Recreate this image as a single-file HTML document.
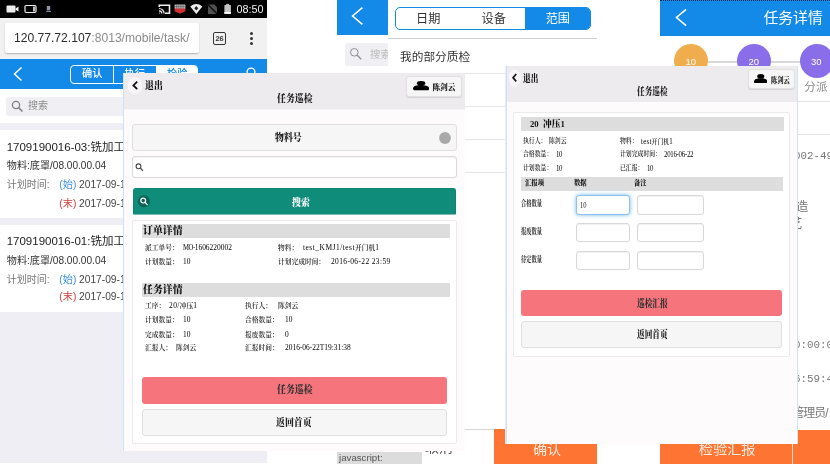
<!DOCTYPE html>
<html lang="zh-CN">
<head>
<meta charset="utf-8">
<title>任务巡检</title>
<style>
html,body{margin:0;padding:0;}
body{width:830px;height:467px;overflow:hidden;background:#fff;position:relative;-webkit-font-smoothing:antialiased;font-family:"Liberation Sans","Noto Sans CJK SC",sans-serif;}
.a{position:absolute;white-space:nowrap;line-height:1;}
.box{position:absolute;box-sizing:border-box;}
.sans{font-family:"Liberation Sans","Noto Sans CJK SC",sans-serif;}
.serif{font-family:"Liberation Serif","Noto Serif CJK SC",serif;}
.mono{font-family:"Liberation Mono","Noto Sans CJK SC",monospace;}
.b{font-weight:bold;}
.t.b{font-weight:900;}
.n{font-weight:400;color:#000;}
.l2{font-weight:400;font-size:7.2px;letter-spacing:-0.45px;position:relative;top:0.3px;}
/* ---------- left phone ---------- */
#p1{will-change:transform;position:absolute;left:0;top:0;width:267px;height:463px;overflow:hidden;background:#efeef4;}
/* ---------- middle phone ---------- */
#p2{will-change:transform;position:absolute;left:337px;top:0;width:323px;height:464px;overflow:hidden;background:#fff;}
/* ---------- right phone ---------- */
#p3{will-change:transform;position:absolute;left:660px;top:0;width:170px;height:464px;overflow:hidden;background:#fff;}
/* ---------- dialogs ---------- */
.dlg{will-change:transform;position:absolute;box-sizing:border-box;background:#fefbfd;border-left:1px solid #cfe0f7;overflow:hidden;}
.dh{position:absolute;left:0;top:0;right:0;background:#eeebee;}
.btn{position:absolute;box-sizing:border-box;background:#f6f6f6;border:1px solid #e0e0e0;border-radius:3px;}
.hd{position:absolute;background:#dddddd;border-radius:1px;}
.t{position:absolute;white-space:nowrap;line-height:1;transform-origin:0 50%;color:#1c1c1c;font-weight:600;font-family:"Liberation Serif","Noto Serif CJK SC",serif;}
</style>
</head>
<body>

<!-- ================= LEFT PHONE ================= -->
<div id="p1">
  <!-- status bar -->
  <div class="box" style="left:0;top:0;width:267px;height:18px;background:#000;"></div>
  <svg class="a" style="left:0;top:0;" width="267" height="18" viewBox="0 0 267 18">
    <!-- camera -->
    <rect x="6.5" y="5.5" width="9" height="7" rx="1" fill="#eee"/>
    <path d="M15.5 8.5 L18.5 6.5 V11.5 L15.5 9.8Z" fill="#eee"/>
    <!-- battery-like -->
    <rect x="25" y="5.5" width="11" height="7" rx="1.2" fill="none" stroke="#eee" stroke-width="1.2"/>
    <rect x="33.2" y="6.5" width="1.6" height="5" fill="#eee"/>
    <rect x="46.8" y="6" width="3.4" height="4.4" fill="#8b97a8"/><rect x="46" y="11" width="5" height="0.9" fill="#8b97a8"/>
    <!-- cast -->
    <path d="M159.3 7 V5.3 h10.2 v8 h-4.5" fill="none" stroke="#eee" stroke-width="1.6"/>
    <path d="M159 13.6 v-1.2 a1.2 1.2 0 0 1 1.2 1.2z" fill="#eee"/>
    <path d="M159 10.8 a2.8 2.8 0 0 1 2.8 2.8 M159 8.5 a5.1 5.1 0 0 1 5.1 5.1" fill="none" stroke="#eee" stroke-width="1.2"/>
    <!-- red block -->
    <rect x="174.6" y="4.4" width="10.8" height="5" rx="0.8" fill="#b9b9b9"/>
    <path d="M176.6 4.4 v4.6 M178.8 4.4 v4.6 M181 4.4 v4.6 M183.2 4.4 v4.6 M174.6 6.6 h10.8" stroke="#555" stroke-width="0.6"/>
    <path d="M174.6 8.6 h10.8 v2.6 l-5.4 2.6 l-5.4 -2.6z" fill="#cf3030"/>
    <!-- wifi -->
    <path d="M190.2 6.4 Q196.3 1.6 202.4 6.4 L196.3 14Z" fill="#eee"/>
    <path d="M194.3 8.3 L196.3 6 L198.3 8.3 L196.3 10.6Z" fill="#222"/>
    <!-- no sim -->
    <path d="M208 4.5 h6.3 l2.7 2.7 v6.8 h-9z" fill="#505050"/>
    <path d="M207.2 4 L217.6 14.3" stroke="#0a0a0a" stroke-width="1.3"/>
    <!-- battery -->
    <rect x="224.4" y="5" width="6.5" height="8.8" fill="#c4c4c4"/>
    <rect x="226.2" y="3.9" width="2.9" height="1.4" fill="#c4c4c4"/>
    <rect x="224.4" y="12" width="6.5" height="1.8" fill="#fff"/>
  </svg>
  <div class="a sans" style="left:236.5px;top:3.9px;font-size:10.8px;color:#f2f2f2;">08:50</div>

  <!-- url bar -->
  <div class="box" style="left:0;top:18px;width:267px;height:41px;background:#f1f1f1;"></div>
  <div class="box" style="left:5px;top:23px;width:194px;height:30px;background:#fff;border-radius:2px;box-shadow:0 1px 1.5px rgba(0,0,0,.25);"></div>
  <div class="a sans" style="left:14px;top:32.3px;font-size:12.1px;color:#8a8a8a;"><span style="color:#2b2b2b;">120.77.72.107</span>:8013/mobile/task/</div>
  <div class="box" style="left:195px;top:24px;width:4px;height:28px;background:linear-gradient(90deg,rgba(255,255,255,0),#fff);"></div>
  <div class="box" style="left:212.7px;top:31.5px;width:13.5px;height:13.5px;border:1.3px solid #333;border-radius:2px;"></div>
  <div class="a sans b" style="left:215.4px;top:34.7px;font-size:7.4px;color:#333;">26</div>
  <div class="box" style="left:250px;top:31.8px;width:3px;height:3px;border-radius:2px;background:#333;"></div>
  <div class="box" style="left:250px;top:36.8px;width:3px;height:3px;border-radius:2px;background:#333;"></div>
  <div class="box" style="left:250px;top:41.8px;width:3px;height:3px;border-radius:2px;background:#333;"></div>

  <!-- blue header -->
  <div class="box" style="left:0;top:59px;width:267px;height:30px;background:#1389e8;"></div>
  <svg class="a" style="left:10px;top:64px;" width="16" height="20" viewBox="0 0 16 20"><path d="M11.5 3.5 L4.5 10 L11.5 16.5" fill="none" stroke="#fff" stroke-width="1.5"/></svg>
  <div class="box" style="left:70px;top:65px;width:128px;height:19px;border:1px solid #fff;border-radius:4px;overflow:hidden;">
    <div class="box" style="left:41.5px;top:0;width:1px;height:19px;background:#fff;"></div>
    <div class="box" style="left:84.5px;top:0;width:44px;height:19px;background:#fff;"></div>
    <div class="a sans" style="left:11px;top:3.3px;font-size:10.2px;font-weight:500;color:#fff;">确认</div>
    <div class="a sans" style="left:53.5px;top:3.3px;font-size:10.2px;font-weight:500;color:#fff;">执行</div>
    <div class="a sans" style="left:96px;top:3.3px;font-size:10.2px;font-weight:500;color:#1389e8;">检验</div>
  </div>
  <svg class="a" style="left:243.5px;top:64.8px;" width="16" height="16" viewBox="0 0 16 16"><circle cx="7" cy="7" r="3.9" fill="none" stroke="#fff" stroke-width="1.4"/><path d="M10 10 L14 14" stroke="#fff" stroke-width="1.3"/></svg>

  <!-- search -->
  <div class="box" style="left:0;top:89px;width:267px;height:34px;background:#fff;"></div>
  <div class="box" style="left:6px;top:97px;width:255px;height:19px;background:#efeff4;border-radius:3px;"></div>
  <svg class="a" style="left:11px;top:100px;" width="13" height="13" viewBox="0 0 13 13"><circle cx="5" cy="5" r="3.6" fill="none" stroke="#808086" stroke-width="1.3"/><path d="M7.6 7.6 L11.5 11.5" stroke="#808086" stroke-width="1.5"/></svg>
  <div class="a sans" style="left:28px;top:101.3px;font-size:10px;color:#8a8a8a;">搜索</div>

  <!-- list item 1 -->
  <div class="box" style="left:0;top:129.5px;width:267px;height:88.5px;background:#fff;"></div>
  <div class="a sans" style="left:6.7px;top:141.6px;font-size:11.5px;color:#222;">1709190016-03:铣加工序</div>
  <div class="a sans" style="left:6.8px;top:161.3px;font-size:10.1px;color:#333;">物料:底罩/08.00.00.04</div>
  <div class="a sans" style="left:6.8px;top:180.2px;font-size:10px;color:#777;">计划时间:</div>
  <div class="a sans" style="left:59.3px;top:180.2px;font-size:10.2px;color:#444;"><span style="color:#3b8fe0;">(始)</span> 2017-09-19</div>
  <div class="a sans" style="left:59.3px;top:198.5px;font-size:10.2px;color:#444;"><span style="color:#c9403e;">(末)</span> 2017-09-19</div>

  <!-- list item 2 -->
  <div class="box" style="left:0;top:224.5px;width:267px;height:87.5px;background:#fff;"></div>
  <div class="a sans" style="left:6.7px;top:235.7px;font-size:11.5px;color:#222;">1709190016-01:铣加工序</div>
  <div class="a sans" style="left:6.8px;top:256.3px;font-size:10.1px;color:#333;">物料:底罩/08.00.00.04</div>
  <div class="a sans" style="left:6.8px;top:274.8px;font-size:10px;color:#777;">计划时间:</div>
  <div class="a sans" style="left:59.3px;top:274.8px;font-size:10.2px;color:#444;"><span style="color:#3b8fe0;">(始)</span> 2017-09-19</div>
  <div class="a sans" style="left:59.3px;top:292.4px;font-size:10.2px;color:#444;"><span style="color:#c9403e;">(末)</span> 2017-09-19</div>
</div>

<!-- ================= MIDDLE PHONE ================= -->
<div id="p2">
  <div class="box" style="left:0;top:0;width:323px;height:35px;background:#1389e8;"></div>
  <svg class="a" style="left:10px;top:4px;" width="20" height="24" viewBox="10 4 20 24"><path d="M25.4 7.7 L15.6 16 L25.4 24.4" fill="none" stroke="#fff" stroke-width="1.6"/></svg>
  <!-- search under popup -->
  <div class="box" style="left:7.5px;top:43px;width:300px;height:22.5px;background:#efeff4;border-radius:3px;"></div>
  <svg class="a" style="left:12px;top:47px;" width="14" height="14" viewBox="0 0 14 14"><circle cx="5.3" cy="5.3" r="3.8" fill="none" stroke="#8e8e93" stroke-width="1"/><path d="M8 8 L12.2 12.2" stroke="#8e8e93" stroke-width="1.3"/></svg>
  <div class="a sans" style="left:33px;top:49px;font-size:10.5px;color:#bbb;">搜索</div>
  <!-- popup -->
  <div class="box" style="left:51px;top:0;width:272px;height:429px;background:#fff;"></div>
  <div class="box" style="left:58px;top:7px;width:196px;height:23px;border:1px solid #1389e8;border-radius:5px;overflow:hidden;background:#fff;">
    <div class="box" style="left:129px;top:0;width:68px;height:24px;background:#1389e8;"></div>
    <div class="a sans" style="left:20px;top:5.1px;font-size:12.2px;color:#333;">日期</div>
    <div class="a sans" style="left:85.5px;top:5.1px;font-size:12.2px;color:#333;">设备</div>
    <div class="a sans" style="left:149.7px;top:5.1px;font-size:12.2px;color:#fff;">范围</div>
  </div>
  <div class="box" style="left:51px;top:37.5px;width:209px;height:1px;background:#cfcfcf;"></div>
  <div class="a sans" style="left:63px;top:51px;font-size:11.7px;color:#333;">我的部分质检</div>
  <div class="box" style="left:51px;top:73px;width:272px;height:1px;background:#e6e6e6;"></div>
  <div class="box" style="left:51px;top:105.5px;width:272px;height:1px;background:#e6e6e6;"></div>
  <div class="box" style="left:51px;top:138.5px;width:272px;height:1px;background:#e6e6e6;"></div>
  <div class="box" style="left:51px;top:171.5px;width:272px;height:1px;background:#e6e6e6;"></div>
  <!-- bottom bar -->
  <div class="box" style="left:0;top:428.5px;width:323px;height:1px;background:#d5d5d5;"></div>
  <div class="box" style="left:156.5px;top:428.5px;width:103.5px;height:35.5px;background:#fd7433;"></div>
  <div class="a sans" style="left:196px;top:441.5px;font-size:14px;color:#ffe9dc;">确认</div>
  <div class="a sans" style="left:88px;top:440px;font-size:14px;color:#555;">取消</div>
  <!-- status -->
  <div class="box" style="left:0;top:452px;width:85px;height:11.5px;background:#dcdcdc;"></div>
  <div class="a sans" style="left:2px;top:453.2px;font-size:9.7px;color:#555;">javascript:</div>
</div>

<!-- ================= RIGHT PHONE ================= -->
<div id="p3">
  <div class="box" style="left:0;top:0;width:170px;height:36px;background:#1389e8;border-top:1px dotted #0a2a55;"></div>
  <svg class="a" style="left:10px;top:5px;" width="20" height="24" viewBox="10 5 20 24"><path d="M26.1 9.3 L16.5 17.5 L26.1 25.6" fill="none" stroke="#fff" stroke-width="1.6"/></svg>
  <div class="a sans" style="left:103.5px;top:10.8px;font-size:14.8px;color:#fff;">任务详情</div>
  <!-- steps -->
  <div class="box" style="left:31px;top:61px;width:139px;height:1.5px;background:#d9d9d9;"></div>
  <div class="box" style="left:14px;top:44px;width:34px;height:34px;border-radius:50%;background:#f0ad4e;"></div>
  <div class="box" style="left:77px;top:44px;width:34px;height:34px;border-radius:50%;background:#8a6de9;"></div>
  <div class="box" style="left:140px;top:44px;width:34px;height:34px;border-radius:50%;background:#8a6de9;"></div>
  <div class="a sans" style="left:25.5px;top:57px;font-size:9.5px;color:#fff;">10</div>
  <div class="a sans" style="left:88.5px;top:57px;font-size:9.5px;color:#fff;">20</div>
  <div class="a sans" style="left:151px;top:57px;font-size:9.5px;color:#fff;">30</div>
  <div class="a sans" style="left:144.3px;top:81px;font-size:11.6px;color:#8c8c8c;">分派</div>
  <div class="box" style="left:0;top:100.5px;width:170px;height:1px;background:#e3e3e3;"></div>
  <div class="box" style="left:0;top:133.5px;width:170px;height:1px;background:#e3e3e3;"></div>
  <div class="a mono" style="left:134px;top:150.5px;font-size:10.83px;color:#777;">002-49</div>
  <div class="a sans" style="left:123.3px;top:200.8px;font-size:12.5px;color:#777;">制造</div>
  <div class="a sans" style="left:117.5px;top:217.5px;font-size:12.5px;color:#777;">工艺</div>
  <div class="a mono" style="left:134px;top:339.7px;font-size:10.83px;color:#777;">0:00:00</div>
  <div class="a mono" style="left:134px;top:374.4px;font-size:10.83px;color:#777;">6:59:46</div>
  <div class="a sans" style="left:132.3px;top:406.9px;font-size:12px;letter-spacing:-1px;color:#777;">管理员/</div>
  <!-- bottom -->
  <div class="box" style="left:0;top:429.5px;width:170px;height:34.5px;background:#fd7433;"></div>
  <div class="box" style="left:132px;top:429.5px;width:1px;height:34.5px;background:#ffd9c4;"></div>
  <div class="a sans" style="left:38.8px;top:441.5px;font-size:14.2px;color:#ffe9dc;">检验汇报</div>
</div>

<!-- ================= DIALOG 1 ================= -->
<div class="dlg" id="d1" style="left:123px;top:73px;width:342px;height:378px;">
 <div class="box" style="left:-124px;top:-73px;width:830px;height:467px;">
  <div class="box" style="left:124px;top:73px;width:341px;height:36px;background:#eeebee;"></div>
  <div class="box" style="left:124px;top:109px;width:341px;height:1px;background:#f6f3f6;"></div>
  <svg class="a" style="left:126px;top:75px;" width="18" height="21" viewBox="126 75 18 21"><ellipse cx="135" cy="85.5" rx="7.3" ry="8.6" fill="#f8f5f8"/><path d="M137.2 81.6 L133.4 85.4 L137.2 89.2" fill="none" stroke="#111" stroke-width="1.8"/></svg>
  <div class="t b" style="left:145.40px;top:80.79px;font-size:9.9px;transform:scaleX(0.9);color:#111;">退出</div>
  <div class="t b" style="left:276.80px;top:93.99px;font-size:9.9px;transform:scaleX(0.9);color:#222;">任务巡检</div>
  <div class="btn" style="left:406px;top:76px;width:56px;height:21px;box-shadow:0 1px 1px rgba(0,0,0,.1);"></div>
  <svg class="a" style="left:412.6px;top:81.3px;" width="16.2" height="9.3" viewBox="0 0 16.2 9.4" preserveAspectRatio="none"><ellipse cx="8.1" cy="2.4" rx="4.2" ry="2.4" fill="#000"/><path d="M0 7.6 C0 5.2 3.5 4.1 8.1 4.1 C12.7 4.1 16.2 5.2 16.2 7.6 C16.2 8.8 15.4 9.4 14.2 9.4 H2 C0.8 9.4 0 8.8 0 7.6Z" fill="#000"/></svg>
  <div class="t b" style="left:432.40px;top:83.87px;font-size:7.7px;color:#222;">陈剑云</div>
  <div class="btn" style="left:132px;top:124px;width:325px;height:27px;"></div>
  <div class="t b" style="left:275.00px;top:133.39px;font-size:9.9px;transform:scaleX(0.9);color:#222;">物料号</div>
  <svg class="a" style="left:438px;top:131px;" width="14" height="14" viewBox="438 131 14 14"><circle cx="445" cy="138" r="5.9" fill="#a9a9a9"/></svg>
  <div class="btn" style="left:132px;top:156px;width:325px;height:22px;background:#fff;border-color:#dadada;box-shadow:inset 0 1px 1px rgba(0,0,0,.05);"></div>
  <svg class="a" style="left:135px;top:163px;" width="10" height="10" viewBox="0 0 10 10"><circle cx="3.5" cy="3.3" r="2.4" fill="none" stroke="#444" stroke-width="1.1"/><path d="M5.3 5.1 L7.9 7.8" stroke="#444" stroke-width="1.3"/></svg>
  <div class="box" style="left:133px;top:188px;width:323px;height:26px;background:#108d7a;border:1px solid #0e8572;border-bottom:none;border-radius:3px 3px 0 0;"></div>
  <div class="box" style="left:133px;top:214px;width:323px;height:1px;background:rgba(14,133,114,.55);border-radius:0 0 3px 3px;"></div>
  <svg class="a" style="left:137px;top:194px;" width="14" height="15" viewBox="137 194 14 15"><circle cx="143.9" cy="201.2" r="6" fill="#0a6355"/><circle cx="143.2" cy="200.6" r="2.4" fill="none" stroke="#fff" stroke-width="1.2"/><path d="M145 202.4 L147.2 204.6" stroke="#fff" stroke-width="1.3" stroke-linecap="round"/></svg>
  <div class="t b" style="left:291.50px;top:197.59px;font-size:9.9px;transform:scaleX(0.9);color:#fff;">搜索</div>
  <div class="box" style="left:132px;top:220px;width:325px;height:224px;background:#fff;border:1px solid #ebebeb;border-radius:2px;"></div>
  <div class="hd" style="left:142px;top:224px;width:308px;height:14px;"></div>
  <div class="t b" style="left:143.10px;top:225.86px;font-size:10.2px;transform:scaleX(0.97);color:#111;">订单详情</div>
  <div class="t" style="left:144.60px;top:244.01px;font-size:7.4px;transform:scaleX(0.91);">派工单号：</div>
  <div class="t" style="left:182.90px;top:244.01px;font-size:7.4px;transform:scaleX(0.91);"><span class="n" style="font-size:7.4px;letter-spacing:-0.5px;">MO-</span><span class="n" style="font-size:8.18px;">1606220002</span></div>
  <div class="t" style="left:278.00px;top:244.01px;font-size:7.4px;transform:scaleX(0.91);">物料：</div>
  <div class="t" style="left:303.00px;top:244.01px;font-size:7.4px;transform:scaleX(0.91);"><span class="n" style="font-size:8.18px;letter-spacing:0.55px;">test_KMJ1/test</span>开门机<span class="n" style="font-size:8.18px;">1</span></div>
  <div class="t" style="left:144.60px;top:257.81px;font-size:7.4px;transform:scaleX(0.91);">计划数量：</div>
  <div class="t" style="left:183.00px;top:257.81px;font-size:7.4px;transform:scaleX(0.91);"><span class="n" style="font-size:8.18px;">10</span></div>
  <div class="t" style="left:278.00px;top:257.81px;font-size:7.4px;transform:scaleX(0.91);">计划完成时间：</div>
  <div class="t" style="left:330.70px;top:257.81px;font-size:7.4px;transform:scaleX(0.91);"><span class="n" style="font-size:8.18px;letter-spacing:0.42px;">2016-06-22 23:59</span></div>
  <div class="hd" style="left:142px;top:283px;width:308px;height:14px;"></div>
  <div class="t b" style="left:143.10px;top:285.36px;font-size:10.2px;transform:scaleX(0.97);color:#111;">任务详情</div>
  <div class="t" style="left:144.60px;top:302.31px;font-size:7.4px;transform:scaleX(0.91);">工序：</div>
  <div class="t" style="left:169.30px;top:302.31px;font-size:7.4px;transform:scaleX(0.91);"><span class="n" style="font-size:8.18px;letter-spacing:0.45px;">20/</span>冲压<span class="n" style="font-size:8.18px;">1</span></div>
  <div class="t" style="left:245.40px;top:302.31px;font-size:7.4px;transform:scaleX(0.91);">执行人：</div>
  <div class="t" style="left:277.50px;top:302.31px;font-size:7.4px;transform:scaleX(0.91);">陈剑云</div>
  <div class="t" style="left:144.60px;top:316.41px;font-size:7.4px;transform:scaleX(0.91);">计划数量：</div>
  <div class="t" style="left:183.00px;top:316.41px;font-size:7.4px;transform:scaleX(0.91);"><span class="n" style="font-size:8.18px;">10</span></div>
  <div class="t" style="left:245.40px;top:316.41px;font-size:7.4px;transform:scaleX(0.91);">合格数量：</div>
  <div class="t" style="left:284.50px;top:316.41px;font-size:7.4px;transform:scaleX(0.91);"><span class="n" style="font-size:8.18px;">10</span></div>
  <div class="t" style="left:144.60px;top:330.61px;font-size:7.4px;transform:scaleX(0.91);">完成数量：</div>
  <div class="t" style="left:183.00px;top:330.61px;font-size:7.4px;transform:scaleX(0.91);"><span class="n" style="font-size:8.18px;">10</span></div>
  <div class="t" style="left:245.40px;top:330.61px;font-size:7.4px;transform:scaleX(0.91);">报废数量：</div>
  <div class="t" style="left:284.50px;top:330.61px;font-size:7.4px;transform:scaleX(0.91);"><span class="n" style="font-size:8.18px;">0</span></div>
  <div class="t" style="left:144.60px;top:344.31px;font-size:7.4px;transform:scaleX(0.91);">汇报人：</div>
  <div class="t" style="left:176.20px;top:344.31px;font-size:7.4px;transform:scaleX(0.91);">陈剑云</div>
  <div class="t" style="left:245.40px;top:344.31px;font-size:7.4px;transform:scaleX(0.91);">汇报时间：</div>
  <div class="t" style="left:284.50px;top:344.31px;font-size:7.4px;transform:scaleX(0.91);"><span class="n" style="font-size:8.18px;letter-spacing:0.0px;">2016-06-22T19:31:38</span></div>
  <div class="box" style="left:142px;top:377px;width:305px;height:27px;background:#f6747c;border-radius:3px;"></div>
  <div class="t b" style="left:276.80px;top:385.49px;font-size:9.9px;transform:scaleX(0.9);color:#333;">任务巡检</div>
  <div class="btn" style="left:142px;top:409px;width:305px;height:27px;"></div>
  <div class="t b" style="left:276.20px;top:418.39px;font-size:9.9px;transform:scaleX(0.9);color:#222;">返回首页</div>
 </div>
</div>

<!-- ================= DIALOG 2 ================= -->
<div class="box" style="left:505px;top:66px;width:1px;height:378px;background:#e8effb;"></div>
<div class="dlg" id="d2" style="left:506px;top:66px;width:292px;height:378px;border-left:1px solid #d0dff7;border-right:1px solid #d3e2f8;">
 <div class="box" style="left:-507px;top:-66px;width:830px;height:467px;">
  <div class="box" style="left:507px;top:66px;width:290px;height:36px;background:#eeebee;"></div>
  <svg class="a" style="left:507px;top:68px;" width="16" height="21" viewBox="507 68 16 21"><ellipse cx="514.85" cy="78" rx="5.95" ry="8.7" fill="#f8f5f8"/><path d="M516.2 74 L513.1 77.7 L516.2 81.4" fill="none" stroke="#111" stroke-width="1.7"/></svg>
  <div class="t b" style="left:523.40px;top:74.05px;font-size:10.0px;transform:scaleX(0.765);color:#111;">退出</div>
  <div class="t b" style="left:636.90px;top:87.45px;font-size:10.0px;transform:scaleX(0.765);color:#222;">任务巡检</div>
  <div class="btn" style="left:748px;top:69px;width:47px;height:20px;box-shadow:0 1px 1px rgba(0,0,0,.1);"></div>
  <svg class="a" style="left:753.8px;top:73.7px;" width="13.5" height="9.5" viewBox="0 0 16.2 9.4" preserveAspectRatio="none"><ellipse cx="8.1" cy="2.4" rx="4.2" ry="2.4" fill="#000"/><path d="M0 7.6 C0 5.2 3.5 4.1 8.1 4.1 C12.7 4.1 16.2 5.2 16.2 7.6 C16.2 8.8 15.4 9.4 14.2 9.4 H2 C0.8 9.4 0 8.8 0 7.6Z" fill="#000"/></svg>
  <div class="t b" style="left:770.80px;top:76.53px;font-size:7.8px;transform:scaleX(0.8);color:#222;">陈剑云</div>
  <div class="box" style="left:513px;top:112px;width:277px;height:245px;background:#fff;border:1px solid #ebebeb;border-radius:2px;"></div>
  <div class="hd" style="left:521px;top:117px;width:263px;height:14px;"></div>
  <div class="t b" style="left:530.20px;top:119.71px;font-size:9.2px;transform:scaleX(0.95);color:#111;">20&nbsp;&nbsp;冲压1</div>
  <div class="t" style="left:522.70px;top:137.61px;font-size:6.5px;transform:scaleX(0.9);">执行人：</div>
  <div class="t" style="left:549.30px;top:137.61px;font-size:6.5px;transform:scaleX(0.9);">陈剑云</div>
  <div class="t" style="left:620.20px;top:137.61px;font-size:6.5px;transform:scaleX(0.9);">物料：</div>
  <div class="t" style="left:640.80px;top:137.61px;font-size:6.5px;transform:scaleX(0.9);"><span class="n" style="font-size:7.6px;letter-spacing:0.3px;">test</span>开门机<span class="n" style="font-size:7.6px;letter-spacing:-0.58px;">1</span></div>
  <div class="t" style="left:522.70px;top:151.41px;font-size:6.5px;transform:scaleX(0.9);">合格数量：</div>
  <div class="t" style="left:555.80px;top:151.41px;font-size:6.5px;transform:scaleX(0.9);"><span class="n" style="font-size:7.6px;letter-spacing:-0.58px;">10</span></div>
  <div class="t" style="left:620.20px;top:151.41px;font-size:6.5px;transform:scaleX(0.9);">计划完成时间：</div>
  <div class="t" style="left:663.60px;top:151.41px;font-size:6.5px;transform:scaleX(0.9);"><span class="n" style="font-size:7.6px;letter-spacing:-0.3px;">2016-06-22</span></div>
  <div class="t" style="left:522.70px;top:165.01px;font-size:6.5px;transform:scaleX(0.9);">计划数量：</div>
  <div class="t" style="left:555.80px;top:165.01px;font-size:6.5px;transform:scaleX(0.9);"><span class="n" style="font-size:7.6px;letter-spacing:-0.58px;">10</span></div>
  <div class="t" style="left:620.20px;top:165.01px;font-size:6.5px;transform:scaleX(0.9);">已汇报：</div>
  <div class="t" style="left:646.80px;top:165.01px;font-size:6.5px;transform:scaleX(0.9);"><span class="n" style="font-size:7.6px;letter-spacing:-0.58px;">10</span></div>
  <div class="hd" style="left:521px;top:177px;width:262px;height:14px;border-radius:0;"></div>
  <div class="t b" style="left:524.50px;top:179.96px;font-size:6.6px;transform:scaleX(0.96);color:#111;">汇报项</div>
  <div class="t b" style="left:574.20px;top:179.96px;font-size:6.6px;transform:scaleX(0.96);color:#111;">数据</div>
  <div class="t b" style="left:634.30px;top:179.96px;font-size:6.6px;transform:scaleX(0.96);color:#111;">备注</div>
  <div class="t" style="left:520.60px;top:200.36px;font-size:7.5px;transform:scaleX(0.7);font-weight:700;">合格数量</div>
  <div class="btn" style="left:576px;top:195px;width:54px;height:20px;background:#fff;border-color:#8dc0ec;box-shadow:0 0 4px rgba(102,175,233,.9);"></div>
  <div class="t" style="left:579.50px;top:201.65px;font-size:8.2px;transform:scaleX(0.8);"><span style="font-weight:400;">10</span></div>
  <div class="btn" style="left:637px;top:195px;width:67px;height:20px;background:#fff;border-color:#d8d8d8;box-shadow:inset 0 1px 1px rgba(0,0,0,.06);"></div>
  <div class="t" style="left:520.60px;top:227.96px;font-size:7.5px;transform:scaleX(0.7);font-weight:700;">报废数量</div>
  <div class="btn" style="left:576px;top:223px;width:54px;height:19px;background:#fff;border-color:#d8d8d8;box-shadow:inset 0 1px 1px rgba(0,0,0,.06);"></div>
  <div class="btn" style="left:637px;top:223px;width:67px;height:19px;background:#fff;border-color:#d8d8d8;box-shadow:inset 0 1px 1px rgba(0,0,0,.06);"></div>
  <div class="t" style="left:520.60px;top:255.86px;font-size:7.5px;transform:scaleX(0.7);font-weight:700;">待定数量</div>
  <div class="btn" style="left:576px;top:251px;width:54px;height:19px;background:#fff;border-color:#d8d8d8;box-shadow:inset 0 1px 1px rgba(0,0,0,.06);"></div>
  <div class="btn" style="left:637px;top:251px;width:67px;height:19px;background:#fff;border-color:#d8d8d8;box-shadow:inset 0 1px 1px rgba(0,0,0,.06);"></div>
  <div class="box" style="left:521px;top:290px;width:261px;height:26px;background:#f6747c;border-radius:3px;"></div>
  <div class="t b" style="left:636.90px;top:298.55px;font-size:10.0px;transform:scaleX(0.765);color:#333;">巡检汇报</div>
  <div class="btn" style="left:521px;top:321px;width:261px;height:27px;"></div>
  <div class="t b" style="left:636.90px;top:329.95px;font-size:10.0px;transform:scaleX(0.765);color:#222;">返回首页</div>
 </div>
</div>

</body>
</html>
